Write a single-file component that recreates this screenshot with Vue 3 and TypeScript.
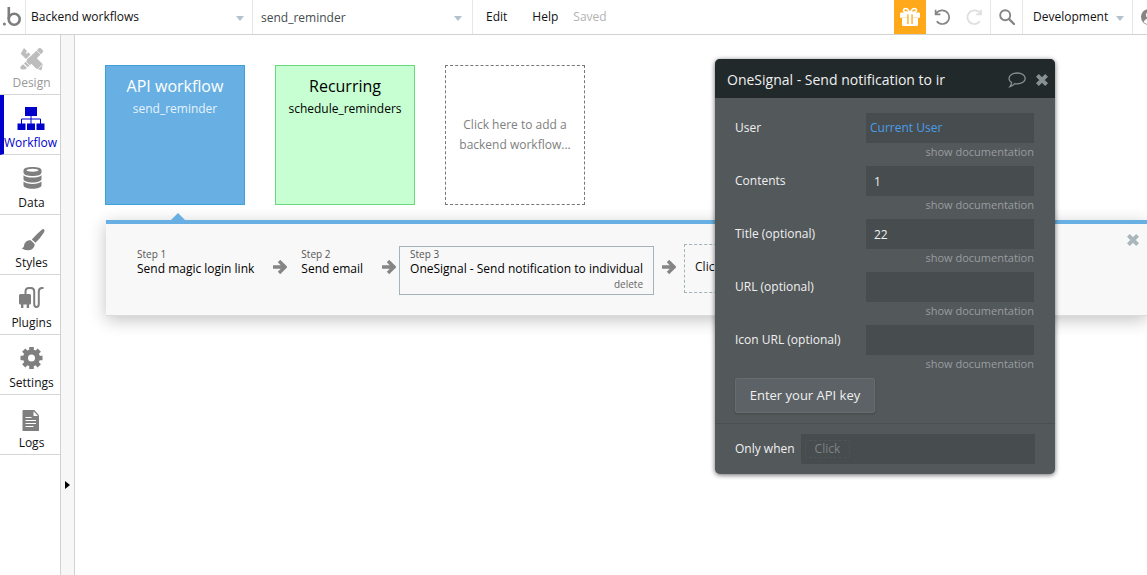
<script setup lang="ts">
import { ref } from 'vue'

interface NavItem {
  id: string
  label: string
}
interface Step {
  label: string
  name: string
  selected: boolean
}
interface Field {
  id: string
  label: string
  value: string
}

const nav: NavItem[] = [
  { id: 'design', label: 'Design' },
  { id: 'workflow', label: 'Workflow' },
  { id: 'data', label: 'Data' },
  { id: 'styles', label: 'Styles' },
  { id: 'plugins', label: 'Plugins' },
  { id: 'settings', label: 'Settings' },
  { id: 'logs', label: 'Logs' },
]
const active = ref('workflow')

const steps: Step[] = [
  { label: 'Step 1', name: 'Send magic login link', selected: false },
  { label: 'Step 2', name: 'Send email', selected: false },
  { label: 'Step 3', name: 'OneSignal - Send notification to individual', selected: true },
]

const fields = ref<Field[]>([
  { id: 'contents', label: 'Contents', value: '1' },
  { id: 'title', label: 'Title (optional)', value: '22' },
  { id: 'url', label: 'URL (optional)', value: '' },
  { id: 'icon-url', label: 'Icon URL (optional)', value: '' },
])
const dialogTitle = ref('OneSignal - Send notification to ir')
</script>

<template>
  <div class="app">
    <header class="topbar">
      <a class="logo" href="#" aria-label="Home">
        <svg width="20" height="20" viewBox="0 0 20 20">
          <circle cx="2.4" cy="17" r="1.5" fill="#7d7d7d" />
          <path d="M6.8 0v12" stroke="#7d7d7d" stroke-width="2.6" fill="none" />
          <circle cx="12.2" cy="12.2" r="5.5" stroke="#7d7d7d" stroke-width="2.6" fill="none" />
        </svg>
      </a>
      <div class="picker page-picker">
        <select aria-label="Page"><option>Backend workflows</option></select>
        <svg class="caret" width="8" height="5" viewBox="0 0 8 5"><path d="M0 0h8L4 5z" /></svg>
      </div>
      <div class="picker element-picker">
        <select aria-label="Workflow"><option>send_reminder</option></select>
        <svg class="caret" width="8" height="5" viewBox="0 0 8 5"><path d="M0 0h8L4 5z" /></svg>
      </div>
      <nav class="menu">
        <button type="button">Edit</button>
        <button type="button">Help</button>
        <span class="saved">Saved</span>
      </nav>
      <div class="tools">
        <button type="button" class="gift" aria-label="Gift">
          <svg width="22" height="20" viewBox="0 0 22 20" fill="#fff">
            <path d="M1 6.6q0-1 1-1h18q1 0 1 1v4.2H1z" />
            <path d="M3 11h16v6.8q0 1.2-1.2 1.2H4.2q-1.2 0-1.2-1.2z" />
            <path d="M10.6 5.5C9.5 2.800 7.800 1.500 6.500 1.500c-1.600 0-2.400 1.400-1.800 2.500.7 1.300 3 1.500 5.900 1.500zM11.400 5.500c1.100-2.700 2.800-4 4.100-4 1.600 0 2.400 1.400 1.800 2.500-.7 1.300-3 1.500-5.900 1.500z" fill="none" stroke="#fff" stroke-width="1.6" />
            <path d="M8.300 7.400h5.400v9.600H8.300z" fill="#ffa81a" />
            <path d="M9.600 7h2.800v10.200H9.600z" />
          </svg>
        </button>
        <button type="button" class="history" aria-label="Undo">
          <svg width="18" height="18" viewBox="0 0 18 18" fill="none" stroke="#858585" stroke-width="1.7">
            <path d="M2.600 1.800v4.600h4.800M3 6.100C4.300 3.600 6.600 2.400 9.300 2.400a6.800 6.800 0 1 1-5.500 10.800" />
          </svg>
        </button>
        <button type="button" class="history" aria-label="Redo">
          <svg width="18" height="18" viewBox="0 0 18 18" fill="none" stroke="#dedede" stroke-width="1.7">
            <path d="M16 1.800v4.600h-4.800M15.600 6.100C14.300 3.600 12 2.400 9.300 2.400a6.800 6.800 0 1 0 5.500 10.800" />
          </svg>
        </button>
        <button type="button" class="search" aria-label="Search">
          <svg width="16" height="16" viewBox="0 0 16 16" fill="none" stroke="#858585">
            <circle cx="6.200" cy="6.200" r="5" stroke-width="1.900" />
            <path d="M10 10l5 5" stroke-width="2.400" stroke-linecap="round" />
          </svg>
        </button>
        <div class="picker version-picker">
          <select aria-label="Version"><option>Development</option></select>
          <svg class="caret" width="8" height="5" viewBox="0 0 8 5"><path d="M0 0h8L4 5z" /></svg>
        </div>
        <button type="button" class="avatar" aria-label="Account">
          <svg width="16" height="16" viewBox="0 0 16 16">
            <circle cx="8" cy="8" r="8" fill="#858585" />
            <circle cx="8" cy="6" r="3" fill="#fff" />
            <path d="M2.500 13q1.500-3.500 5.500-3.500t5.500 3.500Q11 15.200 8 15.200T2.500 13z" fill="#fff" />
          </svg>
        </button>
      </div>
    </header>

    <div class="workspace">
      <nav class="sidebar" aria-label="Sections">
        <button
          v-for="item in nav"
          :key="item.id"
          type="button"
          class="tab"
          :class="{ active: item.id === active, dim: item.id === 'design' }"
          @click="active = item.id"
        >
          <svg v-if="item.id === 'design'" width="28" height="24" viewBox="0 0 28 24" fill="#bdbdbd">
            <path d="M6 1l3.200 3.200-1.600 1.600 1 1 1.600-1.600 2.300 2.300-4.500 4.500L2.700 6.700z" />
            <path d="M15 11.500l2.500 2.500 2-2 1 1-2 2 1.500 1.500M12.800 9.300l2-2 10 10-1.400 6.200-5.600-2.200-9-9z" />
            <path d="M20.800 1.200q1-1 2 0l2 2q1 1 0 2L9.800 20.200 6 16.400zM5.200 17.200L9 21q-2.200 2-3.800 1.400-1.600.3-2.700-.8-1.200-1.600 2.700-4.400z" />
            <path d="M18 2.800l6 6M6.800 13.600l5.400 5.400M20.400 21.600l3.800-3.800" stroke="#fff" stroke-width=".8" fill="none" />
          </svg>
          <svg v-else-if="item.id === 'workflow'" width="28" height="24" viewBox="0 0 28 24" fill="#0000cd">
            <path d="M8 0h12v9H8zM.500 16.500h8V23h-8zM10 16.500h8V23h-8zM19.500 16.500h8V23h-8z" />
            <path d="M14 9v8M4.500 17v-5h19v5" fill="none" stroke="#0000cd" stroke-width="1" />
          </svg>
          <svg v-else-if="item.id === 'data'" width="28" height="24" viewBox="0 0 28 24" fill="#7f7f7f">
            <path d="M5.500 3.500C5.500 1 9 0 14.500 0s9 1 9 3.500v2c0 2.500-4 3.500-9 3.500s-9-1-9-3.500z" />
            <ellipse cx="14.500" cy="3.300" rx="6" ry="1.500" fill="#fff" />
            <path d="M5.500 8.300q2.500 2.300 9 2.300t9-2.300v3.600c0 2.300-4 3.500-9 3.500s-9-1.200-9-3.500zM5.500 14.600q2.500 2.300 9 2.300t9-2.300v3.600c0 2.300-4 3.500-9 3.500s-9-1.200-9-3.500z" />
          </svg>
          <svg v-else-if="item.id === 'styles'" width="28" height="24" viewBox="0 0 28 24" fill="#7f7f7f">
            <path d="M25.800 2.300q1.500 1.200.3 3-3.500 5.600-8.600 10.500l-3.700-3.400Q19 6.600 23.500 2.900q1.300-1.200 2.300-.6zM12.800 13.300l3.800 3.600c.3 3.200-2.300 6-6 6.300-2.700.3-5-.5-6.900-1.900 1.900-.4 2-1.200 2.400-3 .6-3 3-5.400 6.700-5z" />
          </svg>
          <svg v-else-if="item.id === 'plugins'" width="28" height="24" viewBox="0 0 28 24" fill="#7f7f7f">
            <path d="M2.500 7h9q1.500 0 1.500 1.500V16q0 1.500-1.500 1.500H2.500Q1 17.500 1 16V8.500Q1 7 2.500 7zM3 16h2.400v5H3zM8.700 16h2.400v5H8.700z" />
            <path d="M7.500 7V4.500Q7.500 1 11 1h2q3.200 0 3.200 3.500V17q0 3 2.300 3t2.300-3V4.500Q20.800 1 24 1h1.500" fill="none" stroke="#7f7f7f" stroke-width="2" />
          </svg>
          <svg v-else-if="item.id === 'settings'" width="28" height="24" viewBox="0 0 28 24" fill="none" stroke="#7f7f7f">
            <circle cx="13.500" cy="11" r="6" stroke-width="5" />
            <path d="M13.500 0v4M13.500 18v4M2.500 11h4M20.500 11h4M5.700 3.200l3 3M18.300 15.800l3 3M5.700 18.800l3-3M18.300 6.200l3-3" stroke-width="4.600" />
          </svg>
          <svg v-else width="28" height="24" viewBox="0 0 28 24" fill="#7f7f7f">
            <path d="M5.500 3h10.800L21 8.300V23.500q0 .5-1 .5H5.500q-1 0-1-.5V4q0-1 1-1z" />
            <path d="M15.500 4.300V9H20z" fill="#fff" />
            <path d="M7.500 10.500h6M7.500 13.500h10.500M7.500 16.500h10.500M7.500 19.500h8" stroke="#fff" stroke-width="1" />
          </svg>
          <span>{{ item.label }}</span>
        </button>
      </nav>
      <div class="gutter">
        <button type="button" aria-label="Expand">
          <svg width="5" height="8" viewBox="0 0 5 8"><path d="M0 0l5 4-5 4z" /></svg>
        </button>
      </div>

      <main class="canvas">
        <section class="cards">
          <button type="button" class="card api">
            <strong>API workflow</strong>
            <span>send_reminder</span>
          </button>
          <button type="button" class="card recurring">
            <strong>Recurring</strong>
            <span>schedule_reminders</span>
          </button>
          <button type="button" class="card add">Click here to add a backend workflow...</button>
        </section>

        <section class="steps">
          <svg class="pointer" width="14" height="7" viewBox="0 0 14 7"><path d="M0 7l7-7 7 7z" fill="#68b0e3" /></svg>
          <template v-for="step in steps" :key="step.label">
            <div class="step" :class="{ selected: step.selected }">
              <span class="step-label">{{ step.label }}</span>
              <span class="step-name">{{ step.name }}</span>
              <button v-if="step.selected" type="button" class="delete">delete</button>
            </div>
            <svg class="arrow" width="14" height="14" viewBox="0 0 14 14" fill="none" stroke="#858585" stroke-width="3.400">
              <path d="M0 7h11M6 1l6 6-6 6" />
            </svg>
          </template>
          <button type="button" class="add-step">Click here to add an action...</button>
          <button type="button" class="close-steps" aria-label="Close">
            <svg width="12" height="12" viewBox="0 0 12 12" stroke="#a9b7bc" stroke-width="4">
              <path d="M1.400 1.400l9.200 9.200M10.600 1.400l-9.200 9.200" />
            </svg>
          </button>
        </section>
      </main>
    </div>

    <section class="dialog" role="dialog" aria-label="Action properties">
      <header class="dialog-head">
        <input v-model="dialogTitle" type="text" aria-label="Action name" />
        <button type="button" aria-label="Comment">
          <svg width="18" height="16" viewBox="0 0 18 16" fill="none" stroke="#869094" stroke-width="1.300">
            <path d="M9.200 1c4.500 0 8 2.400 8 5.400s-3.500 5.400-8 5.400q-1.300 0-2.500-.2Q4.800 13.800 2 14.600q1.600-2 1.600-4.100Q1 8.800 1 6.400C1 3.400 4.700 1 9.200 1z" />
          </svg>
        </button>
        <button type="button" aria-label="Close">
          <svg width="12" height="12" viewBox="0 0 12 12" stroke="#869094" stroke-width="4">
            <path d="M1.400 1.400l9.200 9.200M10.600 1.400l-9.200 9.200" />
          </svg>
        </button>
      </header>
      <div class="dialog-body">
        <div class="field">
          <label for="user">User</label>
          <button id="user" type="button" class="box expression">Current User</button>
          <a href="#">show documentation</a>
        </div>
        <div v-for="field in fields" :key="field.id" class="field">
          <label :for="field.id">{{ field.label }}</label>
          <input :id="field.id" v-model="field.value" class="box" type="text" />
          <a href="#">show documentation</a>
        </div>
        <button type="button" class="api-key">Enter your API key</button>
      </div>
      <footer class="condition">
        <label for="only-when">Only when</label>
        <div class="box">
          <button id="only-when" type="button">Click</button>
        </div>
      </footer>
    </section>
  </div>
</template>

<style>
body {
  background: #fff;
}
</style>

<style scoped>
.app {
  position: relative;
  display: flex;
  flex-direction: column;
  min-height: 100vh;
  overflow: hidden;
  font: 12px/16px "Open Sans", "Noto Sans", sans-serif;
  color: #111;
}
.app *,
.app {
  box-sizing: border-box;
}
button,
select,
input {
  margin: 0;
  padding: 0;
  border: 0;
  border-radius: 0;
  background: none;
  font: inherit;
  color: inherit;
  text-align: inherit;
}
button,
select {
  cursor: pointer;
}
svg {
  display: block;
  flex: none;
}

/* top bar */
.topbar {
  display: flex;
  height: 35px;
  border-bottom: 1px solid #d2d2d2;
}
.logo {
  display: flex;
  align-items: center;
  justify-content: flex-end;
  width: 26px;
  padding-right: 3px;
  border-right: 1px solid #e3e8ec;
}
.picker {
  position: relative;
  display: flex;
  align-items: center;
  border-right: 1px solid #e3e8ec;
}
.picker select {
  appearance: none;
  width: 100%;
  height: 100%;
}
.caret {
  position: absolute;
  right: 8px;
  top: 16px;
  fill: #b2c1cb;
  pointer-events: none;
}
.page-picker {
  width: 227px;
}
.page-picker select {
  padding-left: 5px;
}
.element-picker {
  width: 220px;
  color: #434c50;
}
.element-picker select {
  padding: 2px 0 0 8px;
}
.element-picker .caret {
  right: 10px;
}
.menu {
  display: flex;
  align-items: center;
  padding-left: 13px;
}
.menu button {
  margin-right: 25px;
}
.menu .saved {
  margin-left: -10px;
  color: #b3b3b3;
}
.tools {
  display: flex;
  margin-left: auto;
}
.tools button {
  display: flex;
  align-items: center;
  justify-content: center;
}
.gift {
  width: 32px;
  background: #ffa81a;
}
.history {
  width: 32px;
}
.search {
  width: 33px;
  border: solid #e3e8ec;
  border-width: 0 1px;
}
.version-picker {
  width: 110px;
}
.version-picker select {
  padding-left: 10px;
}
.tools .avatar {
  width: 14px;
  justify-content: flex-start;
  padding-left: 8px;
  overflow: hidden;
}

/* left rail */
.workspace {
  display: flex;
  flex: 1;
}
.sidebar {
  display: flex;
  flex-direction: column;
  width: 60px;
}
.tab {
  display: flex;
  flex-direction: column;
  align-items: center;
  gap: 4px;
  height: 60px;
  padding: 12px 0 0 3px;
  border-bottom: 1px solid #d6d6d6;
}
.tab.dim {
  color: #999;
}
.tab.active {
  padding: 12px 3px 0 0;
  border-left: 4px solid #0000cd;
  color: #0000cd;
}
.gutter {
  display: flex;
  align-items: flex-start;
  justify-content: center;
  width: 15px;
  padding-top: 446px;
  border: solid #d2d2d2;
  border-width: 0 1px;
  background: #f7f7f7;
}

/* canvas */
.canvas {
  flex: 1;
  min-width: 0;
  padding: 30px 0 0 30px;
}
.cards {
  display: flex;
  gap: 30px;
}
.card {
  display: flex;
  flex-direction: column;
  align-items: center;
  width: 140px;
  height: 140px;
  padding-top: 8px;
  border: 1px solid;
  text-align: center;
}
.card strong {
  font-size: 16px;
  line-height: 24px;
  font-weight: 400;
}
.card span {
  line-height: 22px;
}
.api {
  border-color: #419fd9;
  background: #68b0e3;
  color: #fff;
}
.api span {
  color: #e6f2fb;
}
.recurring {
  border-color: #67d87d;
  background: #c7ffd2;
  color: #000;
}
.add {
  justify-content: center;
  padding: 0 10px;
  border: 1px dashed #777;
  line-height: 20px;
  color: #808080;
}

.steps {
  position: relative;
  display: flex;
  align-items: flex-start;
  height: 96px;
  margin: 15px 0 0 1px;
  padding: 20px 0 0 20px;
  border-top: 4px solid #68b0e3;
  border-bottom: 1px solid #dcdcdc;
  background: #f8f8f8;
  box-shadow: 0 4px 16px rgba(0, 0, 0, 0.24);
  white-space: nowrap;
}
.pointer {
  position: absolute;
  left: 65px;
  top: -11px;
}
.step {
  display: flex;
  flex-direction: column;
  margin-top: 2px;
  padding: 0 10px 2px;
  border: 1px solid transparent;
}
.step.selected {
  border-color: #a3b3b9;
}
.step-label {
  font-size: 10px;
  line-height: 14px;
  color: #555;
}
.step-name {
  line-height: 16px;
  color: #000;
}
.delete {
  align-self: flex-end;
  font-size: 10px;
  line-height: 15px;
  color: #666;
}
.arrow {
  margin: 16px 3px 0 8px;
}
.add-step {
  height: 49px;
  margin-left: 5px;
  padding: 0 10px 4px;
  border: 1px dashed #a3b3b9;
}
.close-steps {
  position: absolute;
  right: 8px;
  top: 10px;
}

/* floating property editor */
.dialog {
  position: absolute;
  top: 59px;
  right: 92px;
  width: 340px;
  border-radius: 5px;
  overflow: hidden;
  background: #53585b;
  box-shadow: 0 1px 5px rgba(0, 0, 0, 0.6);
  color: #f0f0f0;
}
.dialog-head {
  display: flex;
  align-items: center;
  gap: 10px;
  height: 39px;
  padding: 2px 7px 0 12px;
  background: #22292b;
}
.dialog-head input {
  flex: 1;
  min-width: 0;
  font-size: 14px;
  line-height: 20px;
}
.dialog-body {
  padding: 15px 20px 10px;
}
.field {
  display: grid;
  grid-template-columns: 1fr 168px;
  align-items: center;
  margin-right: 1px;
  padding-bottom: 5px;
}
.box {
  height: 30px;
  padding: 0 8px;
  background: #474c4e;
}
.expression {
  padding: 0 4px;
  color: #4b9ce8;
}
.field a {
  grid-column: 2;
  justify-self: end;
  font-size: 11px;
  line-height: 18px;
  color: #999da0;
  text-decoration: none;
}
.api-key {
  width: 140px;
  height: 35px;
  padding-bottom: 2px;
  border: 1px solid #676c6f;
  border-radius: 2px;
  background: #5c6265;
  box-shadow: 0 1px 2px rgba(0, 0, 0, 0.2);
  font-size: 13px;
  text-align: center;
}
.condition {
  display: flex;
  align-items: center;
  gap: 6px;
  padding: 10px 20px;
  border-top: 1px solid #4a4f52;
}
.condition .box {
  display: flex;
  flex: 1;
  align-items: center;
  padding: 0 4px;
}
.condition button {
  padding: 0 9px;
  border: 1px dashed #505557;
  border-radius: 4px;
  color: #7f8486;
}
</style>
